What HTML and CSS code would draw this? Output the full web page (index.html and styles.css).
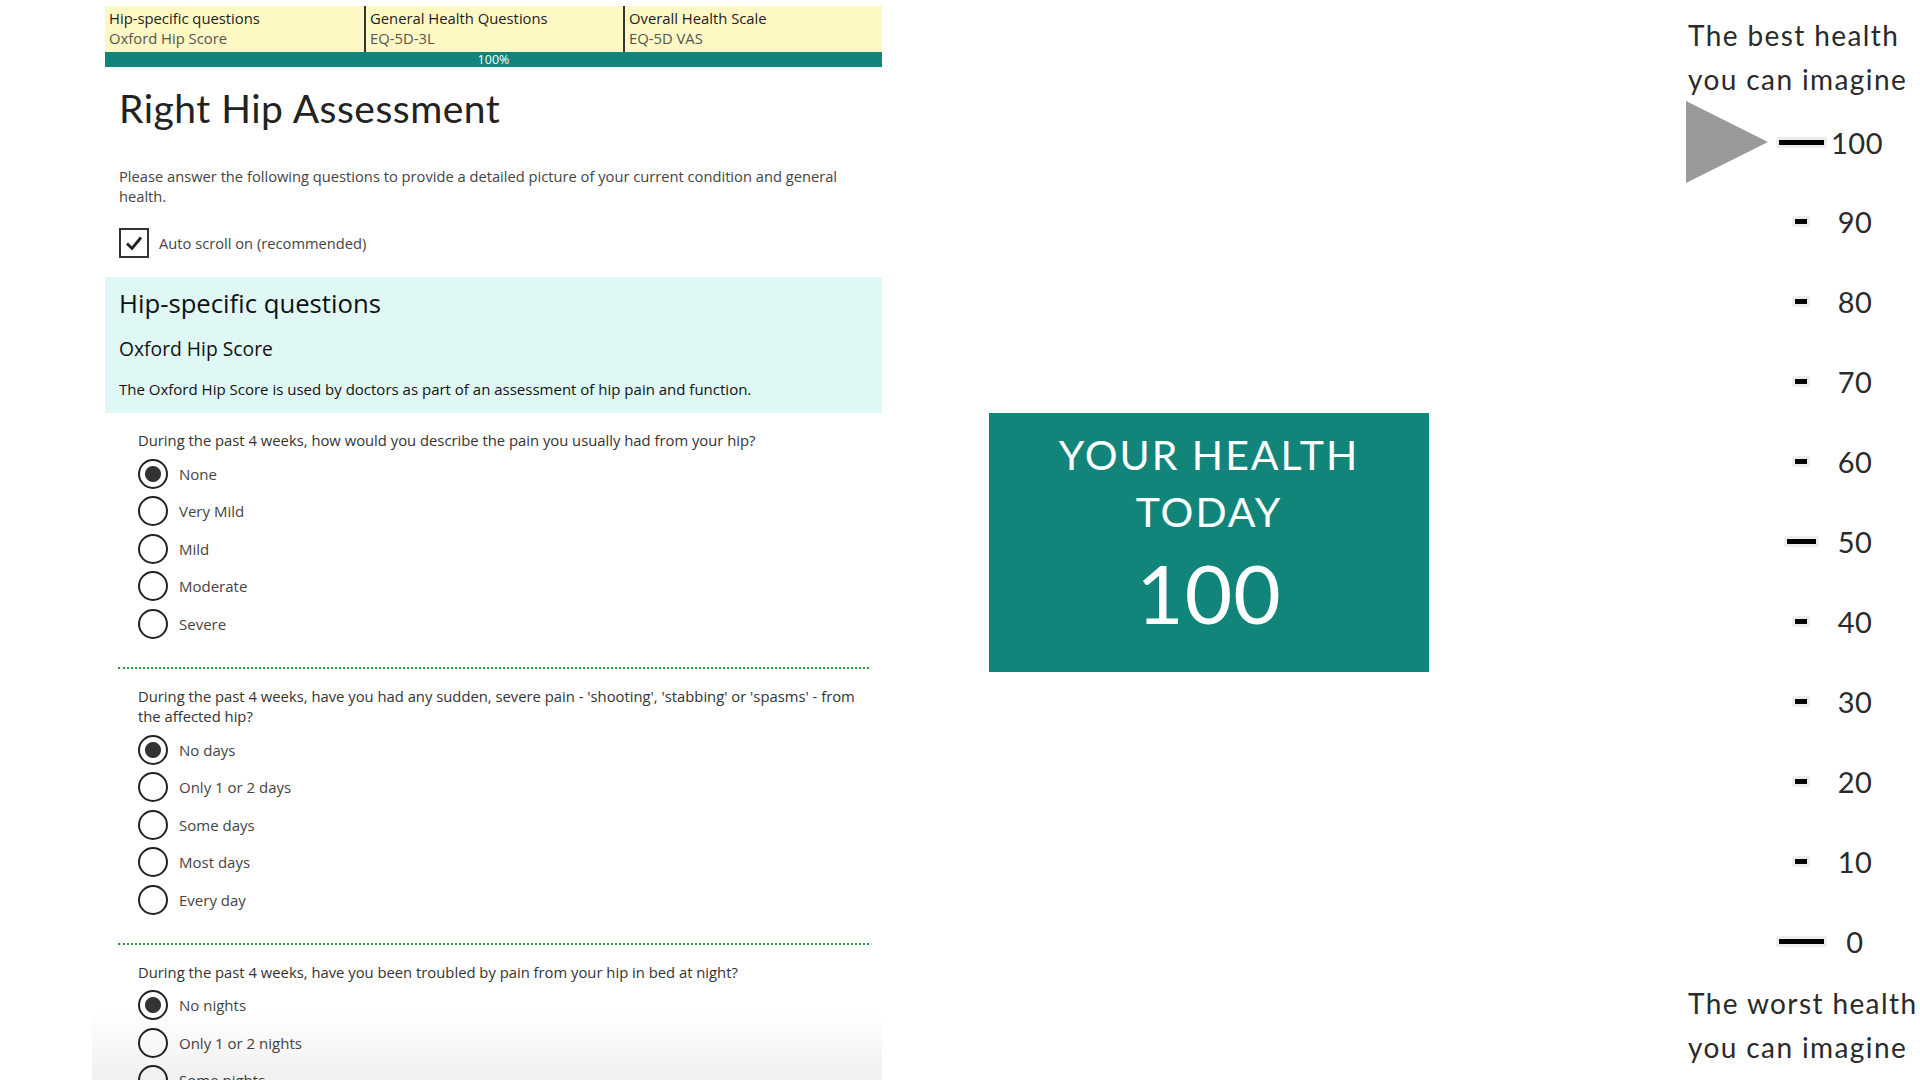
FILE: index.html
```html
<!DOCTYPE html>
<html lang="en">

<head>
    <meta charset="UTF-8">
    <meta name="viewport" content="width=device-width, initial-scale=1.0">
    <title>Right Hip Assessment</title>
    <link rel="stylesheet" href="styles.css">
</head>

<body>
    <div class="page">
        <main class="form">
            <nav class="steps">
                <div class="step">
                    <span class="step-title">Hip-specific questions</span>
                    <span class="step-sub">Oxford Hip Score</span>
                </div>
                <div class="step">
                    <span class="step-title">General Health Questions</span>
                    <span class="step-sub">EQ-5D-3L</span>
                </div>
                <div class="step">
                    <span class="step-title">Overall Health Scale</span>
                    <span class="step-sub">EQ-5D VAS</span>
                </div>
            </nav>
            <div class="progress">100%</div>

            <div class="intro">
                <h1>Right Hip Assessment</h1>
                <p>Please answer the following questions to provide a detailed picture of your current condition and general health.</p>
                <label class="autoscroll">
                    <span class="check-box">
                        <svg width="20" height="20" viewBox="0 0 20 20">
                            <path d="M3 10.5 L8 15.5 L17 4.5" fill="none" stroke="#222" stroke-width="2.8" />
                        </svg>
                    </span>
                    Auto scroll on (recommended)
                </label>
            </div>

            <section class="section-head">
                <h2>Hip-specific questions</h2>
                <h3>Oxford Hip Score</h3>
                <p>The Oxford Hip Score is used by doctors as part of an assessment of hip pain and function.</p>
            </section>

            <!-- pertanyaan 1 -->
            <div class="question">
                <p class="q-text">During the past 4 weeks, how would you describe the pain you usually had from your hip?</p>
                <div class="options">
                    <label class="option"><input type="radio" name="q1" checked><span>None</span></label>
                    <label class="option"><input type="radio" name="q1"><span>Very Mild</span></label>
                    <label class="option"><input type="radio" name="q1"><span>Mild</span></label>
                    <label class="option"><input type="radio" name="q1"><span>Moderate</span></label>
                    <label class="option"><input type="radio" name="q1"><span>Severe</span></label>
                </div>
            </div>

            <!-- pertanyaan 2 -->
            <div class="question">
                <p class="q-text">During the past 4 weeks, have you had any sudden, severe pain - 'shooting', 'stabbing' or 'spasms' - from the affected hip?</p>
                <div class="options">
                    <label class="option"><input type="radio" name="q2" checked><span>No days</span></label>
                    <label class="option"><input type="radio" name="q2"><span>Only 1 or 2 days</span></label>
                    <label class="option"><input type="radio" name="q2"><span>Some days</span></label>
                    <label class="option"><input type="radio" name="q2"><span>Most days</span></label>
                    <label class="option"><input type="radio" name="q2"><span>Every day</span></label>
                </div>
            </div>

            <!-- pertanyaan 3 -->
            <div class="question">
                <p class="q-text">During the past 4 weeks, have you been troubled by pain from your hip in bed at night?</p>
                <div class="options">
                    <label class="option"><input type="radio" name="q3" checked><span>No nights</span></label>
                    <label class="option"><input type="radio" name="q3"><span>Only 1 or 2 nights</span></label>
                    <label class="option"><input type="radio" name="q3"><span>Some nights</span></label>
                    <label class="option"><input type="radio" name="q3"><span>Most nights</span></label>
                    <label class="option"><input type="radio" name="q3"><span>Every night</span></label>
                </div>
            </div>
        </main>

        <div class="health-box">
            <div class="health-label">YOUR HEALTH<br>TODAY</div>
            <div class="health-value">100</div>
        </div>

        <aside class="vas">
            <div class="vas-label">The best health<br>you can imagine</div>
            <div class="scale">
                <div class="row"><span class="pointer"></span><span class="tick long"></span><span class="num">100</span></div>
                <div class="row"><span></span><span class="tick"></span><span class="num">90</span></div>
                <div class="row"><span></span><span class="tick"></span><span class="num">80</span></div>
                <div class="row"><span></span><span class="tick"></span><span class="num">70</span></div>
                <div class="row"><span></span><span class="tick"></span><span class="num">60</span></div>
                <div class="row"><span></span><span class="tick mid"></span><span class="num">50</span></div>
                <div class="row"><span></span><span class="tick"></span><span class="num">40</span></div>
                <div class="row"><span></span><span class="tick"></span><span class="num">30</span></div>
                <div class="row"><span></span><span class="tick"></span><span class="num">20</span></div>
                <div class="row"><span></span><span class="tick"></span><span class="num">10</span></div>
                <div class="row"><span></span><span class="tick long"></span><span class="num">0</span></div>
            </div>
            <div class="vas-label">The worst health<br>you can imagine</div>
        </aside>
    </div>

    <div class="fade"></div>
</body>

</html>
```

FILE: styles.css
```css
body {
    margin: 0;
    font-family: 'Open Sans', 'Liberation Sans', sans-serif;
    color: #333;
    background-color: #ffffff;
    overflow: hidden;
}

.page {
    display: flex;
    align-items: flex-start;
}

/* kolom form kiri */
.form {
    width: 777px;
    margin-left: 105px;
    padding-top: 6px;
    flex-shrink: 0;
}

.steps {
    display: grid;
    grid-template-columns: 1fr 1fr 1fr;
    background-color: #fef8c4;
}

.step {
    display: flex;
    flex-direction: column;
    padding: 2px 4px 4px;
    font-size: 14.8px;
    line-height: 20px;
}

.step + .step {
    border-left: 2px solid #333;
}

.step-title {
    color: #222;
    font-weight: 500;
}

.step-sub {
    color: #555;
}

.progress {
    height: 15px;
    line-height: 15px;
    background-color: #12857a;
    color: #ffffff;
    font-size: 12.5px;
    text-align: center;
}

.intro {
    padding: 0 14px;
}

h1 {
    margin: 19px 0 0;
    font-family: 'Lato', 'Open Sans', sans-serif;
    font-size: 39px;
    font-weight: 400;
    line-height: 44px;
    color: #222;
    letter-spacing: 0.5px;
}

.intro p {
    margin: 36px 0 0;
    font-size: 14.7px;
    line-height: 20px;
    color: #444;
}

.autoscroll {
    display: flex;
    align-items: center;
    gap: 10px;
    margin-top: 22px;
    font-size: 14.7px;
    color: #444;
}

.check-box {
    width: 26px;
    height: 26px;
    border: 2px solid #333;
    display: flex;
    align-items: center;
    justify-content: center;
}

.section-head {
    margin-top: 19px;
    padding: 11px 14px 14px;
    background-color: #dff8f5;
}

h2 {
    margin: 0;
    font-size: 25.7px;
    font-weight: 400;
    line-height: 32px;
    color: #111;
}

h3 {
    margin: 16px 0 0;
    font-size: 19.3px;
    font-weight: 400;
    line-height: 26px;
    color: #111;
}

.section-head p {
    margin: 17px 0 0;
    font-size: 15px;
    font-weight: 500;
    line-height: 20px;
    color: #111;
}

/* pertanyaan */
.question {
    margin: 0 13px;
    padding: 17px 0 28px 20px;
    border-bottom: 2px dotted #27a03a;
}

.q-text {
    margin: 0;
    font-size: 14.8px;
    line-height: 20.5px;
    color: #333;
    padding-right: 10px;
}

.options {
    display: flex;
    flex-direction: column;
    gap: 7.5px;
    margin-top: 8px;
}

.option {
    display: flex;
    align-items: center;
    gap: 11px;
    font-size: 15px;
    color: #444;
}

.option input {
    appearance: none;
    -webkit-appearance: none;
    width: 30px;
    height: 30px;
    margin: 0;
    border: 2px solid #222;
    border-radius: 50%;
    background-color: #ffffff;
}

.option input:checked {
    background: radial-gradient(circle, #333 0, #333 7.5px, #ffffff 8.5px);
}

/* kotak skor */
.health-box {
    margin: 413px 0 0 107px;
    width: 440px;
    height: 259px;
    flex-shrink: 0;
    background-color: #12857a;
    color: #ffffff;
    text-align: center;
    font-family: 'Lato', sans-serif;
}

.health-label {
    padding-top: 13px;
    font-size: 41px;
    line-height: 57px;
    letter-spacing: 2px;
}

.health-value {
    font-size: 82px;
    line-height: 100px;
    letter-spacing: 1px;
    margin-top: 2px;
}

/* skala VAS */
.vas {
    margin: 13px 0 0 259px;
    width: 220px;
    flex-shrink: 0;
    font-family: 'Lato', sans-serif;
    color: #2a2a2a;
}

.vas-label {
    font-size: 28px;
    line-height: 44px;
    letter-spacing: 1.4px;
    white-space: nowrap;
}

.scale {
    display: flex;
    flex-direction: column;
}

.row {
    display: grid;
    grid-template-columns: 83px 60px 48px;
    align-items: center;
    height: 80px;
}

.pointer {
    width: 0;
    height: 0;
    border-left: 82px solid #999;
    border-top: 41px solid transparent;
    border-bottom: 41px solid transparent;
    margin-left: -2px;
}

.tick {
    justify-self: center;
    width: 12px;
    height: 5px;
    background-color: #000;
    border: 3px solid #ececec;
    border-radius: 2px;
}

.tick.mid {
    width: 29px;
}

.tick.long {
    width: 45px;
}

.num {
    font-size: 29px;
    text-align: center;
    letter-spacing: 0.5px;
}

.fade {
    position: fixed;
    left: 92px;
    bottom: 0;
    width: 790px;
    height: 70px;
    background: linear-gradient(to bottom, rgba(0, 0, 0, 0), rgba(0, 0, 0, 0.06));
    pointer-events: none;
}
```
